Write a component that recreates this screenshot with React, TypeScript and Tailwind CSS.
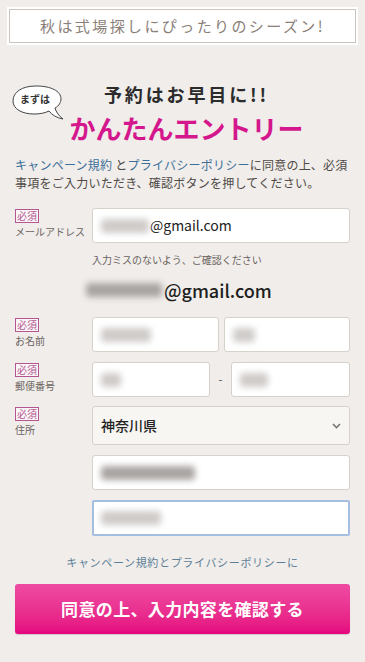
const jp = { fontFamily: '"Noto Sans CJK JP", "Noto Sans", sans-serif' };

function Badge() {
  return (
    <span className="inline-block border border-[#b4568f] text-[#b4568f] text-[10px] leading-[12px] px-[1px] bg-[#fbf7f9]">
      必須
    </span>
  );
}

function Label({ text }: { text: string }) {
  return (
    <div className="w-[77px] shrink-0 flex flex-col items-start gap-[2px] pt-[1px]">
      <Badge />
      <span className="text-[10px] leading-[14px] text-[#6b6360]">{text}</span>
    </div>
  );
}

function Blur({ w, dark }: { w: number; dark?: boolean }) {
  return (
    <span
      className={`inline-block h-[14px] rounded-sm blur-[3px] ${dark ? "bg-[#a8a4a2]" : "bg-[#cfcbc9]"}`}
      style={{ width: w }}
    />
  );
}

function Field({ children, className = "" }: { children?: React.ReactNode; className?: string }) {
  return (
    <div
      className={`h-[35px] bg-white border border-[#d7d1cc] rounded-[3px] flex items-center px-[8px] ${className}`}
    >
      {children}
    </div>
  );
}

function Bubble() {
  return (
    <div className="relative w-[54px] h-[38px] shrink-0">
      <svg width="54" height="38" viewBox="0 0 54 38" className="absolute inset-0">
        <path
          d="M25 2 C11 2 2 8 2 17 C2 25 11 30 23 30 C29 30 34 29 38 27 C41 31 46 34 52 35 C48 32 45 28 44 24 C48 22 50 18 50 15 C50 7 40 2 25 2 Z"
          fill="white"
          stroke="#444"
          strokeWidth="1"
        />
      </svg>
      <span className="absolute left-[9px] top-[7px] text-[10px] font-bold text-[#333]">まずは</span>
    </div>
  );
}

export default function App() {
  return (
    <div className="w-[365px] min-h-[662px] bg-[#f0edea] pt-[7px]" style={jp}>
      <div className="mx-[7px] bg-white p-[2px]">
        <div className="h-[34px] border border-[#cbc3bd] flex items-center justify-center text-[15px] tracking-[0.16em] text-[#8b7f79]">
          秋は式場探しにぴったりのシーズン!
        </div>
      </div>

      <div className="relative mt-[38px]">
        <div className="absolute left-[11px] top-[1px]">
          <Bubble />
        </div>
        <p className="text-center pl-[8px] text-[18px] leading-[22px] font-bold tracking-[0.16em] text-[#2b2b2b]">
          予約はお早目に!!
        </p>
        <p className="text-center pl-[8px] mt-[6px] text-[26px] leading-[34px] font-bold text-[#d4178c]">
          かんたんエントリー
        </p>
      </div>

      <div className="mx-[15px] mt-[11px] text-[12px] leading-[18px] text-[#4f4a48] tracking-[0.02em]">
        <p>
          <span className="text-[#3c6f99]">キャンペーン規約</span> と<span className="text-[#3c6f99]">プライバシーポリシー</span>に同意の上、必須
        </p>
        <p>事項をご入力いただき、確認ボタンを押してください。</p>
      </div>

      <div className="mx-[15px] mt-[16px] flex flex-col">
        <div className="flex">
          <Label text="メールアドレス" />
          <Field className="flex-1">
            <Blur w={48} />
            <span className="text-[14px] text-[#222] ml-[1px]">@gmail.com</span>
          </Field>
        </div>
        <p className="ml-[77px] mt-[9px] text-[10px] text-[#6b6360]">入力ミスのないよう、ご確認ください</p>
        <div className="ml-[71px] mt-[10px] flex items-center h-[26px]">
          <Blur w={76} dark />
          <span className="text-[18px] font-medium text-[#1e1e1e] ml-[2px]">@gmail.com</span>
        </div>

        <div className="flex mt-[14px]">
          <Label text="お名前" />
          <div className="flex-1 flex gap-[5px]">
            <Field className="flex-1">
              <Blur w={50} />
            </Field>
            <Field className="flex-1">
              <Blur w={22} />
            </Field>
          </div>
        </div>

        <div className="flex mt-[10px]">
          <Label text="郵便番号" />
          <div className="flex-1 flex items-center">
            <Field className="w-[118px]">
              <Blur w={20} />
            </Field>
            <span className="w-[21px] text-center text-[11px] text-[#444]">-</span>
            <Field className="flex-1">
              <Blur w={28} />
            </Field>
          </div>
        </div>

        <div className="flex mt-[9px]">
          <Label text="住所" />
          <div className="flex-1 flex flex-col gap-[10px]">
            <div className="h-[39px] bg-[#f8f6f3] border border-[#d7d1cc] rounded-[3px] flex items-center justify-between px-[8px]">
              <span className="text-[14px] font-medium text-[#222]">神奈川県</span>
              <svg width="9" height="6" viewBox="0 0 9 6">
                <path d="M1 1 L4.5 4.5 L8 1" fill="none" stroke="#777" strokeWidth="1.6" />
              </svg>
            </div>
            <Field>
              <Blur w={94} dark />
            </Field>
            <div className="h-[36px] bg-white border-2 border-[#a5bddf] rounded-[2px] flex items-center px-[7px]">
              <Blur w={60} />
            </div>
          </div>
        </div>
      </div>

      <p className="mt-[18px] text-center text-[11px] tracking-[0.06em] text-[#5e7f98]">
        キャンペーン規約とプライバシーポリシーに
      </p>

      <button className="mx-[15px] mt-[13px] w-[335px] h-[50px] rounded-[3px] bg-gradient-to-b from-[#ee4aa2] to-[#e5047f] text-white text-[17px] font-bold tracking-[0.02em] shadow-[0_1px_1px_rgba(0,0,0,0.15)]">
        同意の上、入力内容を確認する
      </button>
    </div>
  );
}
